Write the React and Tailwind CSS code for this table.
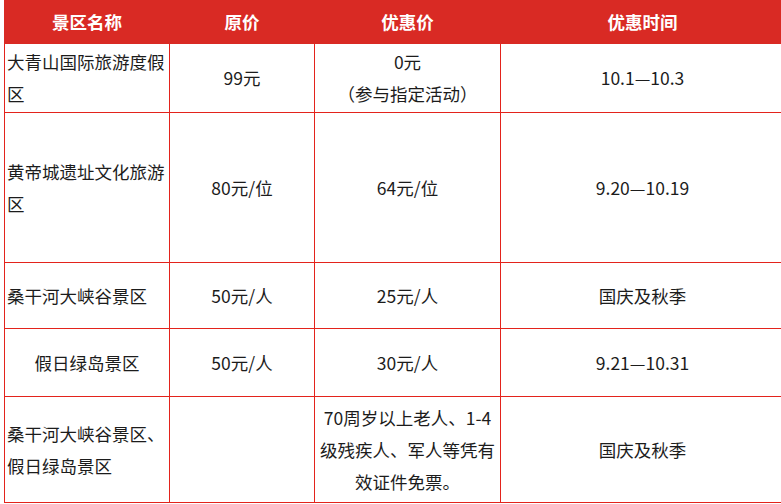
import React from 'react';

const rows = [
  { name: '大青山国际旅游度假区', price: '99元', deal: ['0元', '（参与指定活动）'], time: '10.1—10.3', h: 'h-[69px]' },
  { name: '黄帝城遗址文化旅游区', price: '80元/位', deal: ['64元/位'], time: '9.20—10.19', h: 'h-[150px]' },
  { name: '桑干河大峡谷景区', price: '50元/人', deal: ['25元/人'], time: '国庆及秋季', h: 'h-[66px]' },
  { name: '假日绿岛景区', price: '50元/人', deal: ['30元/人'], time: '9.21—10.31', h: 'h-[68px]', center: true },
  { name: '桑干河大峡谷景区、假日绿岛景区', price: '', deal: ['70周岁以上老人、1-4级残疾人、军人等凭有效证件免票。'], time: '国庆及秋季', h: 'h-[106px]' },
];

export default function App() {
  return (
    <div className="w-full h-[504px] overflow-hidden bg-white pl-1" style={{ fontFamily: '"Noto Sans CJK SC", "Noto Sans", sans-serif' }}>
      <table className="table-fixed border-collapse w-[780px] text-[17.5px] leading-[32px] text-[#1c1c1c]">
        <colgroup>
          <col className="w-[165px]" />
          <col className="w-[145px]" />
          <col className="w-[186px]" />
          <col className="w-[284px]" />
        </colgroup>
        <thead>
          <tr className="h-[43px] bg-[#d92a24] text-white font-bold">
            <th className="border border-[#d92a24] font-bold">景区名称</th>
            <th className="border border-[#d92a24] font-bold">原价</th>
            <th className="border border-[#d92a24] font-bold">优惠价</th>
            <th className="border border-[#d92a24] font-bold">优惠时间</th>
          </tr>
        </thead>
        <tbody>
          {rows.map((r, i) => (
            <tr key={i} className={r.h}>
              <td className={`border border-[#e3231c] px-[2px] align-middle ${r.center ? 'text-center' : 'text-left'}`}>{r.name}</td>
              <td className="border border-[#e3231c] text-center align-middle">{r.price}</td>
              <td className="border border-[#e3231c] px-[4px] text-center align-middle">
                {r.deal.map((d, j) => <div key={j}>{d}</div>)}
              </td>
              <td className="border border-[#e3231c] text-center align-middle">{r.time}</td>
            </tr>
          ))}
        </tbody>
      </table>
    </div>
  );
}
